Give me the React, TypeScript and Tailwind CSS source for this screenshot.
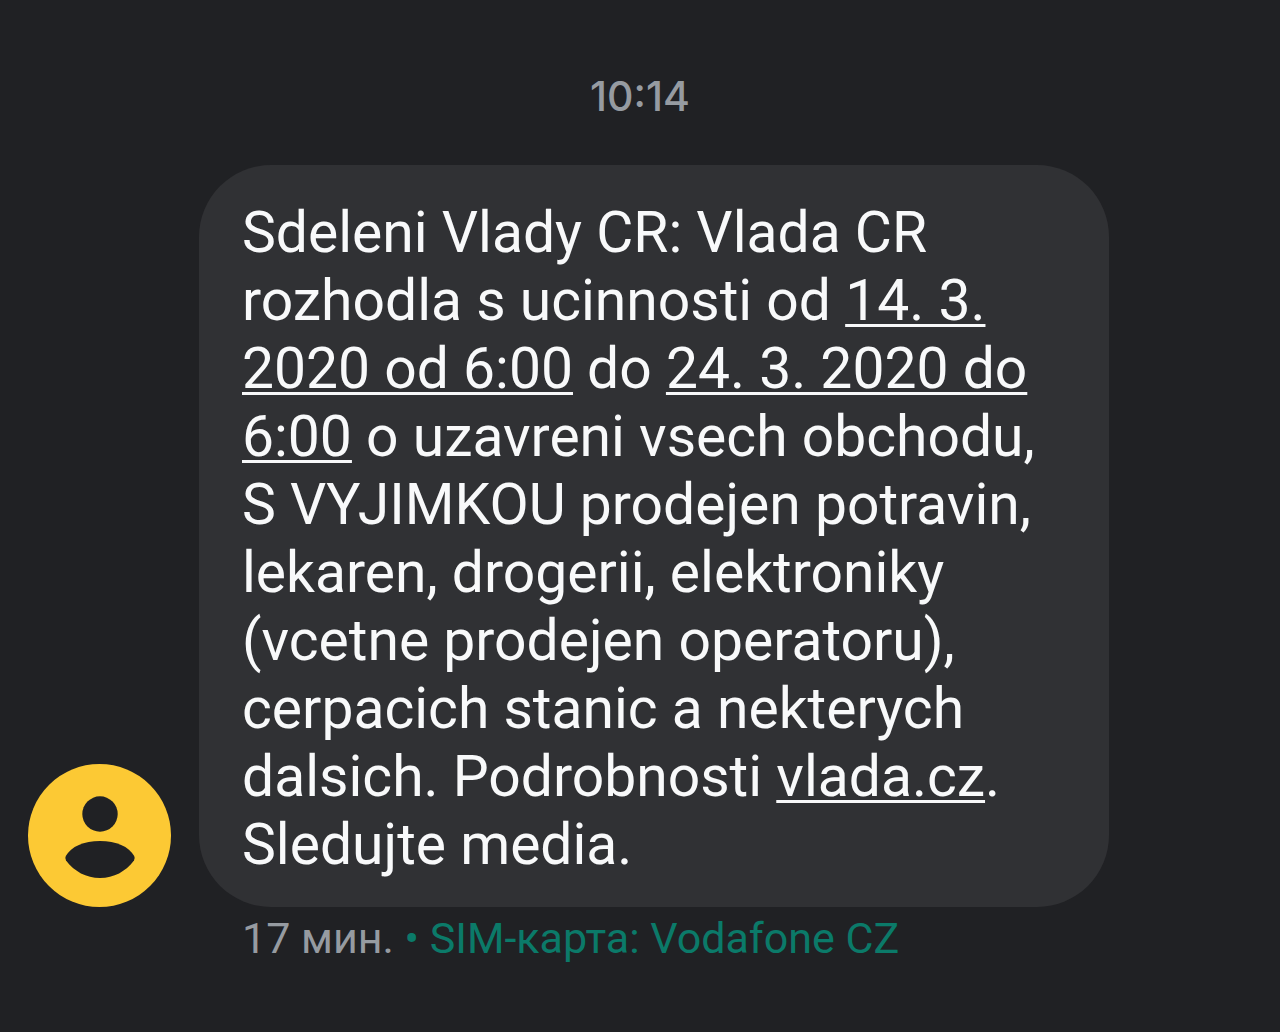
const link = "underline decoration-[3px] underline-offset-[4px] [text-decoration-skip-ink:none]";

export default function App() {
  return (
    <main className="min-h-screen bg-[#202124] pt-[68px] font-['Roboto',sans-serif] text-[#f8f9fa]">
      <time className="block text-center font-['Inter',sans-serif] text-[41px] leading-[56px] font-medium text-[#969ba1]">
        10:14
      </time>

      <div className="mt-[41px] flex items-end gap-7 pr-[171px] pl-7">
        <Avatar />
        <p className="flex-1 rounded-[72px] bg-[#303134] px-[43px] pt-[34px] pb-7 text-[57px] leading-[68px]">
          Sdeleni Vlady CR: Vlada CR rozhodla s ucinnosti od{" "}
          <a href="#from" className={link}>14. 3. 2020 od 6:00</a> do{" "}
          <a href="#to" className={link}>24. 3. 2020 do 6:00</a> o uzavreni vsech
          obchodu, S VYJIMKOU prodejen potravin, lekaren, drogerii, elektroniky
          (vcetne prodejen operatoru), cerpacich stanic a nekterych dalsich.
          Podrobnosti <a href="#vlada" className={link}>vlada.cz</a>. Sledujte media.
        </p>
      </div>

      <p className="pt-[3px] pl-[242px] text-[43px] leading-[56px] text-[#969ba1]">
        17 мин. <span className="text-[#0b7a69]">• SIM-карта: Vodafone CZ</span>
      </p>
    </main>
  );
}

function Avatar() {
  return (
    <svg viewBox="0 0 143 143" className="size-[143px] shrink-0" aria-hidden="true">
      <circle cx="71.5" cy="71.5" r="71.5" fill="#fcc934" />
      <circle cx="72" cy="50" r="17.7" fill="#202124" />
      <path
        d="M37.8 92C43 82.500 56 77 72 77s29 5.500 34.200 15q1.200 2.500-.2 4.500C97.500 107.500 86 114 72 114s-25.500-6.500-34-17.500q-1.400-2-.2-4.500z"
        fill="#202124"
      />
    </svg>
  );
}
